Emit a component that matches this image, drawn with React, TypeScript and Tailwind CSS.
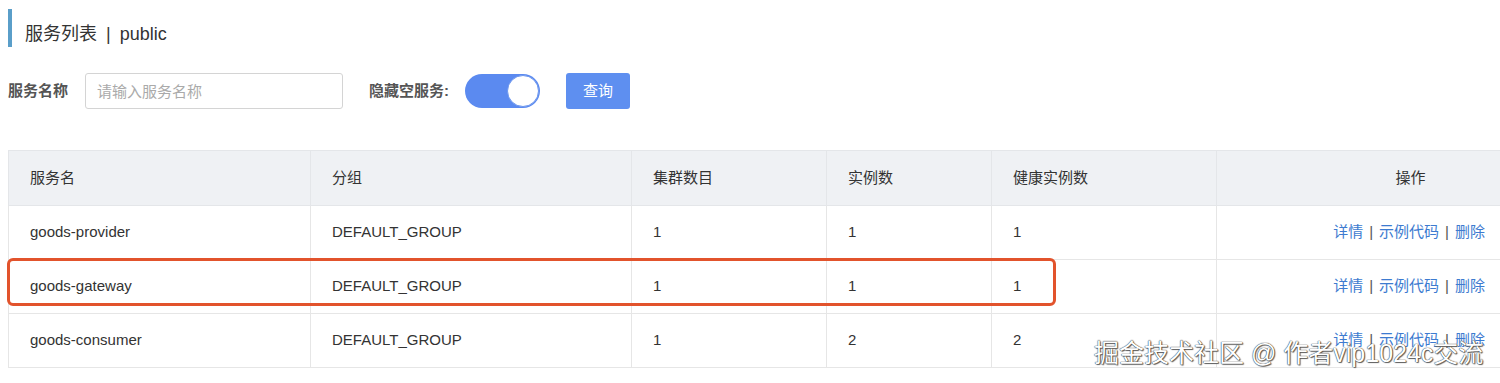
import React from 'react';

interface ServiceRow {
  name: string;
  group: string;
  clusters: number;
  instances: number;
  healthy: number;
}

const SERVICES: ServiceRow[] = [
  { name: 'goods-provider', group: 'DEFAULT_GROUP', clusters: 1, instances: 1, healthy: 1 },
  { name: 'goods-gateway', group: 'DEFAULT_GROUP', clusters: 1, instances: 1, healthy: 1 },
  { name: 'goods-consumer', group: 'DEFAULT_GROUP', clusters: 1, instances: 2, healthy: 2 },
];

export default function App() {
  return (
    <div className="relative w-[1500px] h-[383px] overflow-hidden bg-white font-['Liberation_Sans','Noto_Sans_CJK_SC',sans-serif] text-[#333]">
      {/* Title */}
      <div className="mt-[9px] ml-[8px] h-[38px] border-l-[4px] border-[#5a9ec9] pl-[13px] pt-[15px] text-[18px] leading-[20px] text-[#333]">
        服务列表 <span className="mx-[4px]">|</span> public
      </div>

      {/* Filter */}
      <div className="mt-[26px] ml-[8px] flex items-center h-[36px]">
        <span className="text-[15px] font-bold text-[#555]">服务名称</span>
        <input
          className="ml-[17px] w-[258px] h-[36px] border border-[#d4d4d4] rounded-[3px] px-[11px] text-[15px] placeholder:text-[#aaa] outline-none"
          placeholder="请输入服务名称"
        />
        <span className="ml-[26px] text-[15px] font-bold text-[#555]">隐藏空服务:</span>
        <div className="ml-[16px] w-[75px] h-[34px] rounded-full bg-[#5b8af0] flex items-center justify-end pr-[1px]">
          <div className="w-[32px] h-[32px] rounded-full bg-white border border-[#6d97ee]" />
        </div>
        <button className="ml-[26px] w-[64px] h-[36px] rounded-[3px] bg-[#5e8ff0] text-white text-[15px]">查询</button>
      </div>

      {/* Table */}
      <table className="mt-[41px] ml-[8px] w-[1596px] table-fixed border-collapse text-[15px]">
        <colgroup>
          <col className="w-[302px]" />
          <col className="w-[321px]" />
          <col className="w-[195px]" />
          <col className="w-[165px]" />
          <col className="w-[225px]" />
          <col className="w-[388px]" />
        </colgroup>
        <thead>
          <tr className="h-[55px] bg-[#eff1f4]">
            {['服务名', '分组', '集群数目', '实例数', '健康实例数'].map((h) => (
              <th key={h} className="border border-[#e4e6e9] pl-[21px] text-left font-normal">{h}</th>
            ))}
            <th className="border border-[#e4e6e9] text-center font-normal">操作</th>
          </tr>
        </thead>
        <tbody>
          {SERVICES.map((s) => (
            <tr key={s.name} className="h-[54px]">
              <td className="border border-[#e6e6e6] pl-[21px]">{s.name}</td>
              <td className="border border-[#e6e6e6] pl-[21px]">{s.group}</td>
              <td className="border border-[#e6e6e6] pl-[21px]">{s.clusters}</td>
              <td className="border border-[#e6e6e6] pl-[21px]">{s.instances}</td>
              <td className="border border-[#e6e6e6] pl-[21px]">{s.healthy}</td>
              <td className="border border-[#e6e6e6] text-right pr-[119px] text-[#3d7bd0]">
                详情<span className="mx-[6px] text-[#555]">|</span>示例代码<span className="mx-[6px] text-[#555]">|</span>删除
              </td>
            </tr>
          ))}
        </tbody>
      </table>

      {/* Highlight around goods-gateway */}
      <div className="absolute left-[7px] top-[258px] w-[1049px] h-[48px] border-[3px] border-[#e2532c] rounded-[6px]" />

      {/* Watermark */}
      <div className="absolute left-[1094px] top-[337px] text-[25px] leading-[32px] text-white whitespace-nowrap [text-shadow:0_0_1px_#333,0_0_1px_#333,1px_1px_1px_#666]">
        掘金技术社区 @ 作者vip1024c交流
      </div>
    </div>
  );
}
